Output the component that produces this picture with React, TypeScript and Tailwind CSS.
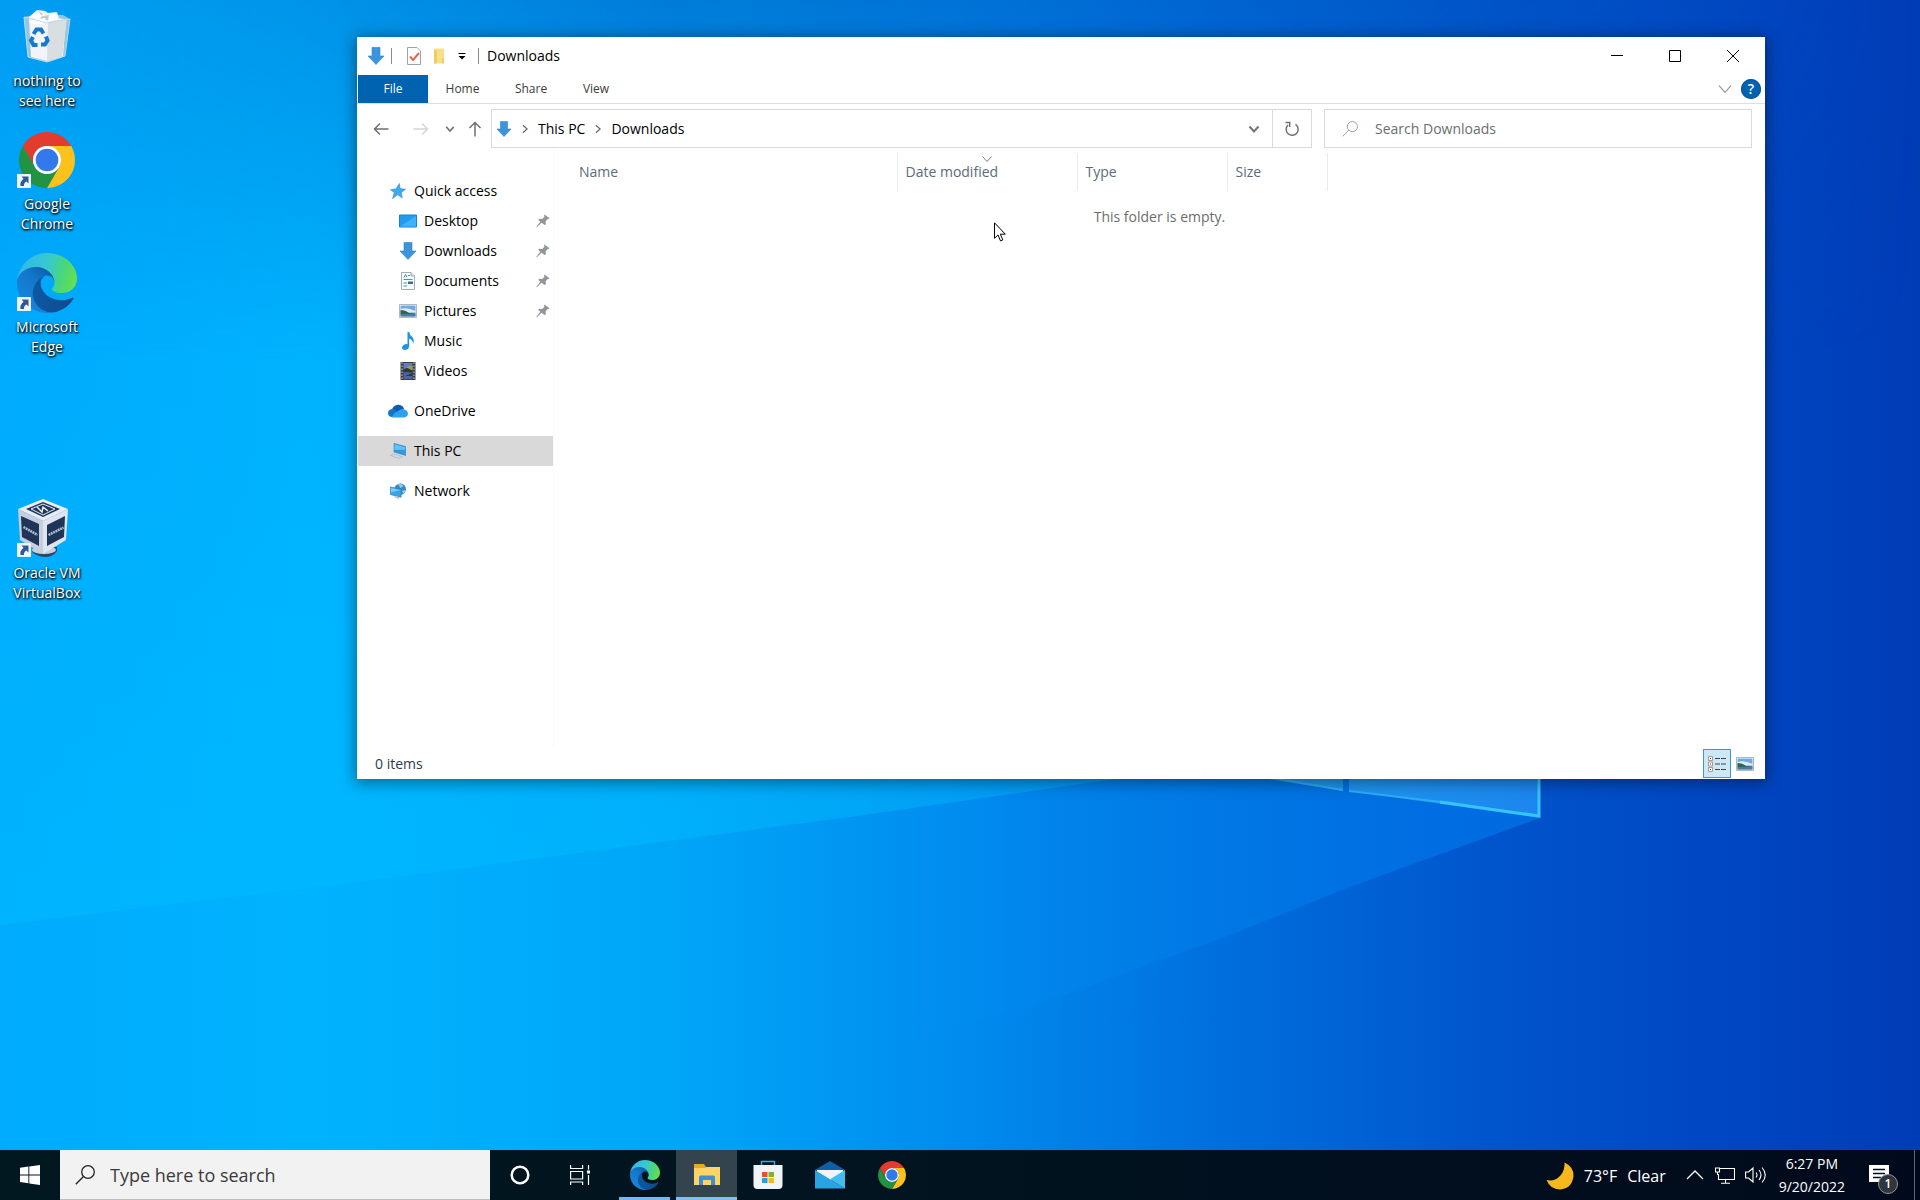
import React, { useId } from "react";

interface IconProps {
  className?: string;
}

interface PlaceData {
  label: string;
  icon: (props: IconProps) => React.ReactNode;
  nested?: boolean;
  pinned?: boolean;
  selected?: boolean;
  gapBefore?: boolean;
}

interface ShortcutData {
  label: string;
  icon: (props: IconProps) => React.ReactNode;
  row: string;
  isLink?: boolean;
}

/* ---------- app logos ---------- */

function EdgeLogo({ className }: IconProps) {
  const id = useId();
  return (
    <svg viewBox="0 0 256 256" className={className} aria-hidden="true">
      <defs>
        <linearGradient id={`${id}a`} x1="63" y1="177" x2="241" y2="177" gradientUnits="userSpaceOnUse">
          <stop offset="0" stopColor="#0c59a4" />
          <stop offset="1" stopColor="#114a8b" />
        </linearGradient>
        <linearGradient id={`${id}b`} x1="153" y1="95" x2="46" y2="212" gradientUnits="userSpaceOnUse">
          <stop offset="0" stopColor="#0f5fae" />
          <stop offset="0.4" stopColor="#1377cb" />
          <stop offset="1" stopColor="#1683d8" />
        </linearGradient>
        <linearGradient id={`${id}c`} x1="10" y1="80" x2="245" y2="140" gradientUnits="userSpaceOnUse">
          <stop offset="0" stopColor="#33b8e8" />
          <stop offset="0.45" stopColor="#36c9cf" />
          <stop offset="0.75" stopColor="#4bd67a" />
          <stop offset="1" stopColor="#66e04e" />
        </linearGradient>
      </defs>
      <path
        fill={`url(#${id}a)`}
        d="M235.68 190.52a93.73 93.73 0 0 1-10.54 4.71 101.87 101.87 0 0 1-35.9 6.46c-47.32 0-88.54-32.55-88.54-74.32A31.48 31.48 0 0 1 117.13 100c-42.8 1.8-53.8 46.4-53.8 72.53 0 73.88 68.09 81.37 82.76 81.37 7.91 0 19.84-2.3 27-4.56l1.31-.44a128.34 128.34 0 0 0 66.6-52.8 4 4 0 0 0-5.32-5.58z"
      />
      <path
        fill={`url(#${id}b)`}
        d="M105.73 241.42a79.2 79.2 0 0 1-22.74-21.34 80.72 80.72 0 0 1 29.53-120c3.12-1.47 8.45-4.13 15.54-4a32.35 32.35 0 0 1 25.69 13 31.88 31.88 0 0 1 6.36 18.66c0-.21 24.46-79.6-80-79.6-43.9 0-80 41.66-80 78.21a130.15 130.15 0 0 0 12.11 56 128 128 0 0 0 156.38 67.11 75.55 75.55 0 0 1-62.78-8z"
      />
      <path
        fill={`url(#${id}c)`}
        d="M152.33 148.86c-.81 1-3.3 2.5-3.3 5.66 0 2.61 1.7 5.12 4.72 7.23 14.38 10 41.49 8.68 41.56 8.68a59.56 59.56 0 0 0 30.27-8.35A61.38 61.38 0 0 0 256 109.17c.26-22.41-8-37.31-11.34-43.91C223.46 23.84 177.72 0 128 0A128 128 0 0 0 0 126.18c.48-36.54 36.8-66.05 80-66.05 3.5 0 23.46.34 42 10.07 16.34 8.58 24.9 18.94 30.85 29.21 6.18 10.67 7.28 24.15 7.28 29.52s-2.74 13.33-7.8 19.93z"
      />
    </svg>
  );
}

function ChromeLogo({ className }: IconProps) {
  return (
    <svg viewBox="0 0 48 48" className={className} aria-hidden="true">
      <path fill="#e33b2e" d="M24 12H44.78A24 24 0 0 0 3.22 12L13.6 30A12 12 0 0 1 24 12Z" />
      <path fill="#fdc21a" d="M44.78 12A24 24 0 0 1 24 48L34.39 30A12 12 0 0 0 24 12Z" />
      <path fill="#229342" d="M3.22 12A24 24 0 0 0 24 48L34.39 30A12 12 0 0 1 13.6 30Z" />
      <circle cx="24" cy="24" r="12" fill="#fff" />
      <circle cx="24" cy="24" r="9.7" fill="#3478ee" />
    </svg>
  );
}

function RecycleBin({ className }: IconProps) {
  return (
    <svg viewBox="0 0 60 60" className={className} aria-hidden="true">
      <path fill="#c9d3da" d="M7 10l15-3 24 1 7 4-5 37-18 6-19-5z" opacity="0.75" />
      <path fill="#f2f4f5" d="M12 10l8-7 8 1 3 2 9-1 2 6 7 2-3 36-16 5-16-4z" />
      <path fill="#d9dee1" d="M31 15l19-3-5 38-15 5z" />
      <path fill="#c3c9cd" d="M20 3l6 4-4 3 10-2-1 5-6 1M40 5l-6 5 8 2-5 3" />
      <path fill="#fff" d="M14 9l7-5 4 5-5 4zM32 7l7-1 2 7-9 1zM12 14l16-3 2 5-15 1z" />
      <path fill="none" stroke="#b9dcf2" strokeWidth="1" d="M7 10l23 6 23-4M7 10l4 40 19 5 18-6 5-37" />
      <g fill="none" stroke="#1779ce" strokeWidth="4">
        <path d="M16.500 27l3-4.500h4.500l2.500 4" />
        <path d="M29 29.500l1.500 4-2.500 4h-4" />
        <path d="M20.500 38h-4l-2.500-4.500 2-3.500" />
      </g>
    </svg>
  );
}

function VirtualBoxLogo({ className }: IconProps) {
  return (
    <svg viewBox="0 0 60 60" className={className} aria-hidden="true">
      <path fill="#31456b" d="M16 48h24v4q-4 6-12 6-7 0-13-5z" />
      <ellipse cx="27" cy="51" rx="12" ry="4" fill="#c7cdda" />
      <path fill="#e8edf5" d="M26 0l25 10-25 12L1 10z" />
      <path fill="#c5cedf" d="M1 10l25 12v33L3 41z" />
      <path fill="#dfe5ef" d="M51 10L26 22v33l23-14z" />
      <path fill="#1e365a" d="M26 3l17 7-17 8-17-8z" />
      <path fill="none" stroke="#e8edf5" strokeWidth="1" d="M26 5l12 5-12 6-12-6z" />
      <path fill="none" stroke="#e8edf5" strokeWidth="1.500" d="M20 8l5 5 1-5 5 4" />
      <path fill="#1e3557" d="M4 17l18 8v22L5 38z" />
      <path fill="#1e3557" d="M48 17l-18 9v21l17-9z" />
      <path stroke="#d6deea" strokeWidth="2.500" strokeDasharray="2 0.600" opacity="0.800" d="M6.500 28l14 8M31.500 36l15-7.500" />
    </svg>
  );
}

function ShortcutArrow({ className }: IconProps) {
  return (
    <svg viewBox="0 0 14 14" className={className} aria-hidden="true">
      <path fill="#f4f7fb" stroke="#bcd3e8" strokeWidth="0.5" d="M0 0h14v14H0z" />
      <path fill="#2c5a9c" d="M4.500 2.500h7v7L9.500 7.500Q6.500 9 7 12H3.500Q2.500 8 6.500 4.800z" />
    </svg>
  );
}

/* ---------- file explorer icons ---------- */

function DownArrow({ className }: IconProps) {
  return (
    <svg viewBox="0 0 18 18" className={className} aria-hidden="true">
      <path fill="#3b94dc" stroke="#2b7fc6" strokeWidth="0.6" d="M5 0.5h8V9h4L9 17.500 1 9h4z" />
    </svg>
  );
}

function StarIcon({ className }: IconProps) {
  return (
    <svg viewBox="0 0 18 18" className={className} aria-hidden="true">
      <path fill="#3fa9f0" stroke="#2b8bd4" strokeWidth="0.6" d="M10.500 .5l1 5.800L17.500 7l-4.700 3.600 1 6.400L8.700 13.300 2.800 17.500l2-6.700L.5 7.500l6.300-.9z" />
    </svg>
  );
}

function DesktopIcon({ className }: IconProps) {
  return (
    <svg viewBox="0 0 18 18" className={className} aria-hidden="true">
      <path fill="#1f9cf2" stroke="#1581d3" d="M0.500 3h17v12h-17z" />
      <path fill="#42b1fb" d="M1 14.500L17 4v10.500z" />
    </svg>
  );
}

function DocumentIcon({ className }: IconProps) {
  return (
    <svg viewBox="0 0 18 18" className={className} aria-hidden="true">
      <path fill="#fbfdfe" stroke="#8b9ba6" strokeWidth="0.800" d="M2.500 .5h9.500l3.500 3.500v13.500h-13z" />
      <path fill="#dbe5ec" stroke="#8b9ba6" strokeWidth="0.800" d="M12 .5V4h3.500" />
      <path stroke="#3d91cc" d="M5 5.500l1.500-3 1.500 3M9 3.500h2M4.500 7.500h9M4.500 11h3.500M4.500 14h3.500" fill="none" />
      <path fill="#2f6e98" d="M9 9.500h5V12H9z" />
    </svg>
  );
}

function PictureIcon({ className }: IconProps) {
  return (
    <svg viewBox="0 0 18 18" className={className} aria-hidden="true">
      <path fill="#fff" stroke="#9aa7b3" strokeWidth="0.800" d="M.5 2.500h17v13H.5z" />
      <path fill="#6fa9e3" d="M1.500 3.500h15v11h-15z" />
      <path fill="#dcecf8" d="M1.500 7q7-2 15 2v1.500h-15z" />
      <path fill="#2f6650" d="M1.500 8q5 0 8.500 3l6.500.5v1h-15z" />
      <path fill="#50789c" d="M1.500 12.300h15v2.200h-15z" />
    </svg>
  );
}

function MusicIcon({ className }: IconProps) {
  return (
    <svg viewBox="0 0 18 18" className={className} aria-hidden="true">
      <path fill="#1f94df" d="M8.500 0h1.700q.4 2.800 2.600 4.500 3.200 3 1.200 7.500.2-4-3.800-5.500v7.500q-.4 3.300-3.800 4Q3 18 3 15.500q.6-3 4-3.500l1.500.2z" />
    </svg>
  );
}

function VideoIcon({ className }: IconProps) {
  return (
    <svg viewBox="0 0 18 18" className={className} aria-hidden="true">
      <path fill="#3b3f46" d="M1.500 0h15v18h-15z" />
      <path fill="#5d7fd0" d="M4.500 1h9v7.500h-9z" />
      <path fill="#4a62a8" d="M4.500 9.500h9V17h-9z" />
      <path fill="#a8a23c" d="M8 5.500l3-2 2.500 1v4H9z" />
      <path fill="#2c3a35" d="M4.500 7l4-1 5 2.500v2l-9-.5zM6 14l7.500-3v3z" />
      <path stroke="#c3c7cc" strokeDasharray="1.500 1.500" d="M3 .5v17M15 .5v17" />
    </svg>
  );
}

function OneDriveIcon({ className }: IconProps) {
  return (
    <svg viewBox="0 0 20 14" className={className} aria-hidden="true">
      <path fill="#0a5db0" d="M4 5Q7 0 12 1q3.500 1 4 4l-6 4z" />
      <path fill="#1473c8" d="M3.500 13Q0 12 0 9q.3-3.500 4-4 3 0 5 2.500L12 10z" />
      <path fill="#2ba3ec" d="M4 13.500Q5 9 10 7q4-3 6.500-1.500Q20 6.500 20 10q-.4 3-3 3.500z" />
    </svg>
  );
}

function ComputerIcon({ className }: IconProps) {
  return (
    <svg viewBox="0 0 18 18" className={className} aria-hidden="true">
      <path fill="#2d9be3" stroke="#2783c4" strokeWidth="0.700" d="M4.500.5l13 3.500v10L4.500 10z" />
      <path fill="#67c0f3" d="M5 1.500l12 3.200v3L5 8z" />
      <path fill="#cfd6dc" stroke="#98a3ad" strokeWidth="0.500" d="M.5 14l3.500-2 10 3.500-4 2z" />
    </svg>
  );
}

function NetworkIcon({ className }: IconProps) {
  return (
    <svg viewBox="0 0 18 18" className={className} aria-hidden="true">
      <circle cx="11.500" cy="7" r="6.500" fill="#3a8bc4" />
      <path fill="#8ed0f2" d="M9 1.500q4-1 6 2l-3 2zM13 9l4.500-1-2 4z" />
      <path fill="#39a5e6" stroke="#2474ac" strokeWidth="0.700" d="M.5 4.500l12 2.500v9L.5 13z" />
      <path fill="#7cc9f4" d="M1 5.500l11 2.300L1 10.500z" />
      <path fill="#b9c6cf" d="M4 15.500l3-1 4.500 2-2 1.500z" />
    </svg>
  );
}

function PinIcon({ className }: IconProps) {
  return (
    <svg viewBox="0 0 14 14" className={className} aria-hidden="true">
      <path fill="#8f969c" d="M8.500.5l5 3.800-1.300.9-.6-.2-2 2.500.3 2.700-1.300.8L5.500 8.800 1.200 13l-.9.300.3-.9 3.700-4.600-2.100-1.800 1-1.200 3 .2 2.300-2.300-.5-1z" />
    </svg>
  );
}

function Chevron({ className }: IconProps) {
  return (
    <svg viewBox="0 0 12 12" className={className} fill="none" stroke="currentColor" aria-hidden="true">
      <path d="M1.500 3.500L6 8.500l4.500-5" />
    </svg>
  );
}

function SearchIcon({ className }: IconProps) {
  return (
    <svg viewBox="0 0 20 20" className={className} fill="none" stroke="currentColor" aria-hidden="true">
      <circle cx="13" cy="7" r="6.300" />
      <path d="M8.500 11.500L.8 19.200" />
    </svg>
  );
}

/* ---------- desktop ---------- */

function Wallpaper() {
  return (
    <svg
      viewBox="0 0 1920 1200"
      preserveAspectRatio="none"
      className="absolute inset-0 size-full"
      aria-hidden="true"
    >
      <defs>
        <linearGradient id="sky" x1="0" x2="1" y1="0" y2="0">
          <stop offset="0" stopColor="#00abfd" />
          <stop offset="0.16" stopColor="#00b3ff" />
          <stop offset="0.35" stopColor="#00a6f8" />
          <stop offset="0.5" stopColor="#008cee" />
          <stop offset="0.64" stopColor="#006edd" />
          <stop offset="0.78" stopColor="#0054cc" />
          <stop offset="0.92" stopColor="#0044c0" />
          <stop offset="1" stopColor="#003cb6" />
        </linearGradient>
        <linearGradient id="top" x1="0" x2="0" y1="0" y2="1">
          <stop offset="0" stopColor="#0052b8" stopOpacity="0.5" />
          <stop offset="0.3" stopColor="#0052b8" stopOpacity="0" />
        </linearGradient>
        <linearGradient id="topMask" x1="0" x2="1" y1="0" y2="0">
          <stop offset="0" stopColor="#fff" stopOpacity="0.3" />
          <stop offset="0.35" stopColor="#fff" stopOpacity="1" />
          <stop offset="0.7" stopColor="#fff" stopOpacity="0.7" />
          <stop offset="1" stopColor="#fff" stopOpacity="0" />
        </linearGradient>
        <mask id="topFade">
          <rect width="1920" height="1200" fill="url(#topMask)" />
        </mask>
        <linearGradient id="beam" x1="0" x2="0" y1="0" y2="1">
          <stop offset="0" stopColor="#00bcff" stopOpacity="0" />
          <stop offset="0.7" stopColor="#00bcff" stopOpacity="0.4" />
          <stop offset="1" stopColor="#00bcff" stopOpacity="0.5" />
        </linearGradient>
        <linearGradient id="beamLow" x1="0" x2="1" y1="0" y2="0">
          <stop offset="0" stopColor="#0092ff" stopOpacity="0" />
          <stop offset="0.5" stopColor="#0090fa" stopOpacity="0.25" />
          <stop offset="1" stopColor="#0084f8" stopOpacity="0.5" />
        </linearGradient>
        <linearGradient id="pane" x1="0" x2="1" y1="0" y2="0">
          <stop offset="0" stopColor="#1d9cf0" />
          <stop offset="1" stopColor="#1c86ee" />
        </linearGradient>
      </defs>
      <rect width="1920" height="1200" fill="url(#sky)" />
      <rect width="1920" height="1200" fill="url(#top)" mask="url(#topFade)" />
      <path fill="url(#beam)" d="M0 925L350 883 850 817 1250 760V400H0z" />
      <path fill="url(#beamLow)" d="M850 760H1540V818L1347 888 1225 937 1050 1000 850 1060z" />
      <path fill="url(#pane)" d="M1250 770H1343V791L1250 776zM1349 770H1540V818L1349 791z" />
      <path fill="none" stroke="#2fabf6" strokeWidth="2" d="M1250 774L1343 790M1349 791L1450 803" />
      <path fill="none" stroke="#35c4fb" strokeWidth="3" d="M1539 770V816L1440 802" />
    </svg>
  );
}

const shortcuts: ShortcutData[] = [
  { label: "nothing to see here", icon: RecycleBin, row: "row-start-1" },
  { label: "Google Chrome", icon: ChromeLogo, row: "row-start-2", isLink: true },
  { label: "Microsoft Edge", icon: EdgeLogo, row: "row-start-3", isLink: true },
  { label: "Oracle VM VirtualBox", icon: VirtualBoxLogo, row: "row-start-5", isLink: true },
];

function DesktopShortcuts() {
  return (
    <div className="relative grid w-[94px] auto-rows-[123px]">
      {shortcuts.map(({ label, icon: Icon, row, isLink }) => (
        <button key={label} className={`flex flex-col items-center pt-[7px] ${row}`}>
          <span className="relative block size-[60px]">
            <Icon className={label === "Google Chrome" ? "m-0.5 size-14" : "size-[60px]"} />
            {isLink && <ShortcutArrow className="absolute bottom-0.5 left-0 size-3.5" />}
          </span>
          <span className="mt-1 w-[88px] text-sm leading-5 text-white [text-shadow:1px_1px_2px_#000,0_1px_3px_#000]">
            {label}
          </span>
        </button>
      ))}
    </div>
  );
}

/* ---------- explorer window ---------- */

function TitleBar() {
  return (
    <header className="flex h-[38px] items-center">
      <DownArrow className="ml-2.5 size-[18px]" />
      <span className="ml-1.5 h-4 w-px bg-[#8c8c8c]" />
      <button aria-label="Properties" className="ml-3.5">
        <svg viewBox="0 0 16 18" className="h-[18px] w-4">
          <path fill="#fdfdfe" stroke="#9aa3b0" d="M1.500.5H11l3.500 3.500v13.500h-13z" />
          <path fill="none" stroke="#de6a4a" strokeWidth="2" d="M4 9.500l3 3.500 6-7" />
        </svg>
      </button>
      <button aria-label="New folder" className="ml-2.5">
        <svg viewBox="0 0 14 18" className="h-[18px] w-3.5">
          <path fill="#f8e08a" d="M2 1.500h10v15H2z" />
          <path fill="#f0cd62" d="M2 3h3v13.500H2zM10 11h2v5.500h-2z" />
        </svg>
      </button>
      <button aria-label="Customize Quick Access Toolbar" className="ml-2.5">
        <svg viewBox="0 0 12 12" className="size-3">
          <path d="M2.500 3h7v1h-7zM2.500 6h7L6 9.500z" />
        </svg>
      </button>
      <span className="ml-2.5 h-4 w-px bg-[#8c8c8c]" />
      <h1 className="ml-2 text-sm">Downloads</h1>
      <div className="mr-[3px] ml-auto flex">
        <button aria-label="Minimize" className="flex h-[38px] w-[58px] items-center justify-center">
          <svg viewBox="0 0 12 12" className="size-3">
            <path stroke="#000" d="M0 5.500h12" />
          </svg>
        </button>
        <button aria-label="Maximize" className="flex h-[38px] w-[58px] items-center justify-center">
          <svg viewBox="0 0 12 12" className="size-3">
            <path fill="none" stroke="#000" d="M.5.5h11v11H.5z" />
          </svg>
        </button>
        <button aria-label="Close" className="flex h-[38px] w-[58px] items-center justify-center">
          <svg viewBox="0 0 12 12" className="size-3">
            <path stroke="#000" d="M0 0l12 12M12 0L0 12" />
          </svg>
        </button>
      </div>
    </header>
  );
}

function RibbonTabs() {
  return (
    <div className="flex h-[29px] items-stretch border-b border-[#dcdfe3] text-xs text-[#3c3c3c]">
      <button className="ml-px w-[70px] bg-[#0063b1] text-white">File</button>
      <button className="w-[69px]">Home</button>
      <button className="w-[68px]">Share</button>
      <button className="w-[62px]">View</button>
      <button aria-label="Expand the Ribbon" className="ml-auto text-[#9a9a9a]">
        <Chevron className="size-4" />
      </button>
      <button
        aria-label="Help"
        className="my-auto mr-1 ml-2 flex size-5 items-center justify-center rounded-full bg-[#0063b1] text-sm font-semibold text-white ring-1 ring-[#0f5597] ring-inset"
      >
        ?
      </button>
    </div>
  );
}

function AddressBar() {
  return (
    <div className="flex items-center pt-[5px] pr-[13px] text-[#757575]">
      <button aria-label="Back" className="ml-4">
        <svg viewBox="0 0 16 16" className="size-4" fill="none" stroke="#6f6f6f" strokeWidth="1.500">
          <path d="M15.500 8H1.500M7 2.500L1.500 8 7 13.500" />
        </svg>
      </button>
      <button aria-label="Forward" className="ml-6" disabled>
        <svg viewBox="0 0 16 16" className="size-4" fill="none" stroke="#d4d4d4" strokeWidth="1.500">
          <path d="M.5 8h14M9 2.500L14.500 8 9 13.500" />
        </svg>
      </button>
      <button aria-label="Recent locations" className="ml-4">
        <Chevron className="size-2.5 stroke-2" />
      </button>
      <button aria-label="Up" className="ml-3">
        <svg viewBox="0 0 16 16" className="size-4" fill="none" stroke="#6f6f6f" strokeWidth="1.500">
          <path d="M8 15.500V1.500M2.500 7L8 1.500 13.500 7" />
        </svg>
      </button>
      <div className="ml-2 flex h-[39px] flex-1 items-center border border-[#d9d9d9] text-sm text-black">
        <DownArrow className="ml-1 size-4" />
        <Chevron className="ml-2 size-2.5 -rotate-90 stroke-[1.500] text-[#6a6a6a]" />
        <button className="ml-2">This PC</button>
        <Chevron className="ml-2 size-2.5 -rotate-90 stroke-[1.500] text-[#6a6a6a]" />
        <button className="ml-2">Downloads</button>
        <button aria-label="Previous locations" className="ml-auto flex h-full w-9 items-center justify-center text-[#757575]">
          <Chevron className="size-3 stroke-2" />
        </button>
        <button aria-label="Refresh" className="flex h-full w-[39px] items-center justify-center border-l border-[#d9d9d9]">
          <svg viewBox="0 0 16 16" className="size-4" fill="none" stroke="#707070" strokeWidth="1.500">
            <path d="M11.500 3.300A6 6 0 1 1 4 4M1.500 1.500h4.200V6" />
          </svg>
        </button>
      </div>
      <label className="ml-3 flex h-[39px] w-[428px] items-center border border-[#d9d9d9]">
        <SearchIcon className="ml-[17px] size-4 text-[#8a8a8a]" />
        <input
          aria-label="Search Downloads"
          placeholder="Search Downloads"
          className="ml-[17px] min-w-0 flex-1 text-sm outline-none placeholder:text-[#6d6d6d]"
        />
      </label>
    </div>
  );
}

const places: PlaceData[] = [
  { label: "Quick access", icon: StarIcon },
  { label: "Desktop", icon: DesktopIcon, nested: true, pinned: true },
  { label: "Downloads", icon: DownArrow, nested: true, pinned: true },
  { label: "Documents", icon: DocumentIcon, nested: true, pinned: true },
  { label: "Pictures", icon: PictureIcon, nested: true, pinned: true },
  { label: "Music", icon: MusicIcon, nested: true },
  { label: "Videos", icon: VideoIcon, nested: true },
  { label: "OneDrive", icon: OneDriveIcon, gapBefore: true },
  { label: "This PC", icon: ComputerIcon, selected: true, gapBefore: true },
  { label: "Network", icon: NetworkIcon, gapBefore: true },
];

function Sidebar() {
  return (
    <nav className="flex w-[197px] flex-col border-r border-[#fafafa] pt-7 pl-px text-sm text-black">
      {places.map(({ label, icon: Icon, nested, pinned, selected, gapBefore }) => (
        <a
          key={label}
          href="#"
          className={`flex h-[30px] items-center pr-[3px] ${nested ? "pl-10" : "pl-[30px]"} ${
            gapBefore ? "mt-2.5" : ""
          } ${selected ? "bg-[#d9d9d9]" : ""}`}
        >
          <span className="flex w-5 justify-center">
            <Icon className={label === "OneDrive" ? "h-3.5 w-5" : nested ? "size-[18px]" : "size-4"} />
          </span>
          <span className="ml-1.5">{label}</span>
          {pinned && <PinIcon className="ml-auto size-3.5" />}
        </a>
      ))}
    </nav>
  );
}

function FileList() {
  return (
    <div className="flex-1 pt-[5px]">
      <table className="w-full table-fixed text-left text-sm">
        <thead className="text-[#5b6b7a]">
          <tr className="h-[38px] [&>th]:font-normal">
            <th className="w-[343px] border-r border-[#e8ebef] pl-[25px]">Name</th>
            <th aria-sort="descending" className="relative w-[180px] border-r border-[#e8ebef] pl-2">
              <Chevron className="absolute top-0 left-1/2 size-3 -translate-x-1/2 text-[#7b7b7b]" />
              Date modified
            </th>
            <th className="w-[150px] border-r border-[#e8ebef] pl-2">Type</th>
            <th className="w-[100px] border-r border-[#e8ebef] pl-2">Size</th>
            <td />
          </tr>
        </thead>
        <tbody>
          <tr>
            <td colSpan={5} className="pt-4 text-center text-[#6d6d6d]">
              This folder is empty.
            </td>
          </tr>
        </tbody>
      </table>
    </div>
  );
}

function StatusBar() {
  return (
    <footer className="flex h-[31px] items-center pr-[11px] pl-[18px] text-sm text-[#2f3b4c]">
      <span>0 items</span>
      <button
        aria-label="Details view"
        className="ml-auto flex h-[29px] w-7 items-center justify-center border border-[#3c9fb8] bg-[#cce8f6]"
      >
        <svg viewBox="0 0 18 16" className="h-4 w-[18px]" fill="none">
          <path fill="#fff" stroke="#a37f78" strokeWidth="0.800" d="M.5.5h4v4h-4zM.5 6h4v4h-4zM.5 11.500h4v4h-4z" />
          <path stroke="#444" strokeWidth="1.200" d="M7 2.500h5M13 2.500h5M7 8h5M13 8h5M7 13.500h5M13 13.500h5M2 2.500h1M2 8h1M2 13.500h1" />
        </svg>
      </button>
      <button aria-label="Large thumbnails view" className="ml-[5px]">
        <PictureIcon className="size-[18px]" />
      </button>
    </footer>
  );
}

function ExplorerWindow() {
  return (
    <section className="absolute top-[37px] right-[155px] left-[357px] flex h-[742px] flex-col bg-white shadow-[0_2px_14px_2px_rgba(0,0,0,0.4)]">
      <TitleBar />
      <RibbonTabs />
      <AddressBar />
      <div className="flex flex-1">
        <Sidebar />
        <FileList />
      </div>
      <StatusBar />
    </section>
  );
}

/* ---------- taskbar ---------- */

function Taskbar() {
  return (
    <footer className="relative flex h-[50px] items-stretch bg-gradient-to-r from-[#021820] via-[#01131f] to-[#010a1c] text-white">
      <button aria-label="Start" className="flex w-[60px] items-center justify-center">
        <svg viewBox="0 0 20 20" className="size-5" fill="#fff">
          <path d="M0 2.800l8.400-1.200v7.900H0zM9.300 1.500L20 0v9.500H9.300zM0 10.400h8.400v7.900L0 17.100zM9.300 10.400H20V20L9.300 18.400z" />
        </svg>
      </button>
      <label className="flex w-[430px] items-center border-b border-[#bdbdbd] bg-[#f2f2f2] text-[#222]">
        <SearchIcon className="ml-[15px] size-5 stroke-[1.300]" />
        <input
          aria-label="Type here to search"
          placeholder="Type here to search"
          className="ml-[15px] min-w-0 flex-1 text-lg outline-none placeholder:text-[#3a3a3a]"
        />
      </label>
      <button aria-label="Cortana" className="flex w-[60px] items-center justify-center">
        <svg viewBox="0 0 20 20" className="size-5" fill="none" stroke="#fff" strokeWidth="2.500">
          <circle cx="10" cy="10" r="8.300" />
        </svg>
      </button>
      <button aria-label="Task View" className="flex w-[60px] items-center justify-center">
        <svg viewBox="0 0 20 20" className="size-5" fill="none" stroke="#fff" strokeWidth="1.200">
          <path d="M.6 0v3.500h12V0M.6 6.500h12v7.500H.6zM.6 20v-3h12v3M18.500 0v4.500M18.500 10v10" />
          <path fill="#fff" d="M17.500 6h2v2h-2z" />
        </svg>
      </button>
      <button aria-label="Microsoft Edge" className="mr-1.5 ml-[9px] flex w-[51px] items-center justify-center border-b-[3px] border-[#76b9ed] pt-[3px]">
        <EdgeLogo className="size-[30px]" />
      </button>
      <button aria-label="File Explorer" className="flex w-[61px] items-center justify-center border-b-[3px] border-[#85bdf0] bg-[#34444f] pt-[3px]">
        <svg viewBox="0 0 28 24" className="h-6 w-7">
          <path fill="#e9a821" d="M1 1h10l2 3h14v5H1z" />
          <path fill="#ffd467" d="M1 5h11l2-1h13v18H1z" />
          <path fill="#3e8fd0" d="M6 22v-8q0-1.500 1.500-1.500h13Q22 12.500 22 14v8h-4v-5h-8v5z" />
        </svg>
      </button>
      <button aria-label="Microsoft Store" className="flex w-[62px] items-center justify-center">
        <svg viewBox="0 0 30 30" className="size-[30px]">
          <path fill="none" stroke="#3fa6e0" strokeWidth="1.500" d="M8.500 6V1.500h13V6" />
          <path fill="#f1f4f7" d="M.5 5h29v20q0 4-4 4h-21q-4 0-4-4z" />
          <path fill="#e8502c" d="M9 12h5.500v5H9z" />
          <path fill="#7cb52c" d="M15.500 12H21v5h-5.500z" />
          <path fill="#2a9fe0" d="M9 18h5.500v5H9z" />
          <path fill="#f8b91e" d="M15.500 18H21v5h-5.500z" />
        </svg>
      </button>
      <button aria-label="Mail" className="flex w-[62px] items-center justify-center">
        <svg viewBox="0 0 30 30" className="size-[30px]">
          <path fill="#0f5fa8" d="M0 10L15 1l15 9v9H0z" />
          <path fill="#f1f5f9" d="M2 10h26v5l-13 6L2 15z" />
          <path fill="#29a3e2" d="M0 10l30 18.500H0z" />
          <path fill="#43bdf1" d="M30 10L15 19.300l15 9.200z" />
        </svg>
      </button>
      <button aria-label="Google Chrome" className="flex w-[62px] items-center justify-center">
        <ChromeLogo className="size-7" />
      </button>

      <button className="ml-auto flex items-center pt-0.5 text-base">
        <svg viewBox="0 0 28 28" className="h-7 w-7" aria-hidden="true">
          <path fill="#f6b81c" d="M18.500.5Q28 5 27.500 14 26 26.500 14 27.500 4 27 .5 18q8 2 14-4.500Q19 8 18.500.5z" />
        </svg>
        <span className="ml-2.5">73°F</span>
        <span className="ml-2.5">Clear</span>
      </button>
      <button aria-label="Show hidden icons" className="ml-5">
        <svg viewBox="0 0 18 12" className="h-3 w-[18px]" fill="none" stroke="#fff" strokeWidth="1.300">
          <path d="M1 10l8-8 8 8" />
        </svg>
      </button>
      <button aria-label="Network" className="ml-[11px]">
        <svg viewBox="0 0 20 18" className="h-[18px] w-5" fill="none" stroke="#fff" strokeWidth="1.100">
          <path d="M5 2.500h14.500v11H3.500V8M10.500 13.500V17M6 17.200h9M.5 2h4v4h-4zM2.500 6v3" />
        </svg>
      </button>
      <button aria-label="Volume" className="ml-2.5">
        <svg viewBox="0 0 22 18" className="h-[18px] w-[22px]" fill="none" stroke="#fff" strokeWidth="1.100">
          <path d="M.6 6h3L8 2v14l-4.400-4h-3zM11 6.500q2 2.500 0 5M14 4q4 5 0 10M17 1.500q6.500 7.500 0 15" />
        </svg>
      </button>
      <button className="ml-3 text-center text-sm leading-[23px]">
        <span className="block">6:27 PM</span>
        <span className="block">9/20/2022</span>
      </button>
      <button aria-label="Notifications" className="relative mr-[14px] ml-[21px] w-[34px]">
        <svg viewBox="0 0 22 22" className="absolute top-[15px] left-[3px] size-[22px]">
          <path fill="#fff" d="M0 0h20v17h-6v4l-4-4H0z" />
          <path stroke="#01101e" strokeWidth="1.500" d="M4 4.500h12M4 8.500h12M4 12.500h8" />
        </svg>
        <span className="absolute top-6 left-3 flex size-5 items-center justify-center rounded-full border border-[#8d949b] bg-[#30363d] text-xs font-semibold">
          1
        </span>
      </button>
      <button aria-label="Show desktop" className="w-1.5 border-l border-[#5d646e]" />
    </footer>
  );
}

export default function App() {
  return (
    <div className="relative flex h-screen flex-col overflow-hidden font-['Open_Sans','Noto_Sans',sans-serif]">
      <Wallpaper />
      <main className="relative flex-1">
        <DesktopShortcuts />
        <ExplorerWindow />
        <svg viewBox="0 0 12 20" className="absolute top-[222px] left-[994px] h-5 w-3" aria-hidden="true">
          <path fill="#fff" stroke="#000" d="M.5.8v15.500l3.500-3.400 2.500 6 2.300-1-2.500-5.700h5z" />
        </svg>
      </main>
      <Taskbar />
    </div>
  );
}
